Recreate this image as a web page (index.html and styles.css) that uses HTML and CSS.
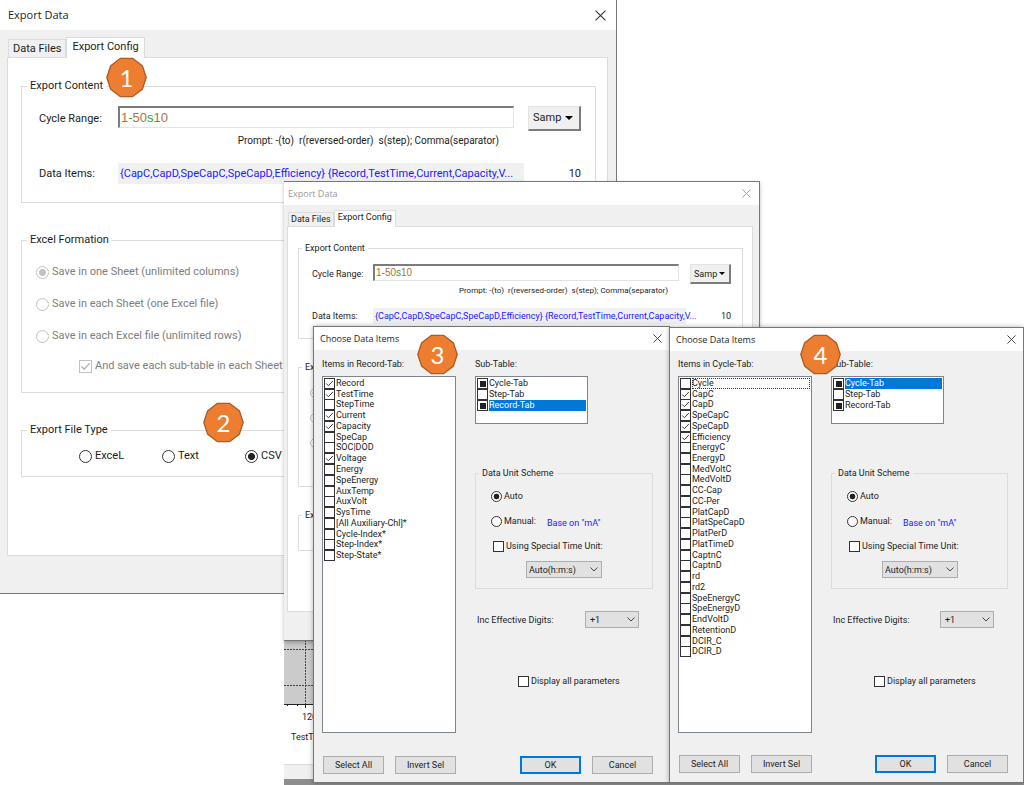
FILE: index.html
```html
<!DOCTYPE html>
<html lang="en">
<head>
<meta charset="utf-8">
<title>Export Data</title>
<link rel="stylesheet" href="styles.css">
</head>
<body>
<main class="desktop">

  <section class="export-window export-window--main" aria-label="Export Data">
    <header class="titlebar">
      <h1 class="titlebar__text">Export Data</h1>
      <button class="close" type="button" aria-label="Close"><svg viewBox="0 0 10 10"><path d="M0.5 0.5 9.5 9.5M9.5 0.5 0.5 9.5"/></svg></button>
    </header>
    <div class="export-body">
      <nav class="tabs">
        <button class="tab" type="button">Data Files</button>
        <button class="tab tab--active" type="button">Export Config</button>
      </nav>
      <div class="panel">
        <fieldset class="group group--content">
          <legend>Export Content</legend>
          <div class="row row--range">
            <label class="row__label" for="range-a">Cycle Range:</label>
            <div class="code">
              <input class="code__input" id="range-a" type="text" value="1-50s10">
              <div class="code__paint" aria-hidden="true">1<b>-</b>50<b>s</b>10</div>
            </div>
            <button class="samp" type="button">Samp <span class="samp__arrow"></span></button>
          </div>
          <p class="prompt">Prompt: -(to)&nbsp; r(reversed-order)&nbsp; s(step); Comma(separator)</p>
          <div class="row row--items">
            <span class="row__label">Data Items:</span>
            <span class="items">{CapC,CapD,SpeCapC,SpeCapD,Efficiency} {Record,TestTime,Current,Capacity,V...</span>
            <span class="count">10</span>
          </div>
        </fieldset>
        <fieldset class="group group--excel" disabled>
          <legend>Excel Formation</legend>
          <label class="option"><input type="radio" name="sheet-a" checked>Save in one Sheet (unlimited columns)</label>
          <label class="option"><input type="radio" name="sheet-a">Save in each Sheet (one Excel file)</label>
          <label class="option"><input type="radio" name="sheet-a">Save in each Excel file (unlimited rows)</label>
          <label class="option option--nested"><input type="checkbox" checked>And save each sub-table in each Sheet</label>
        </fieldset>
        <fieldset class="group group--type">
          <legend>Export File Type</legend>
          <div class="types">
            <label class="option"><input type="radio" name="type-a">ExceL</label>
            <label class="option"><input type="radio" name="type-a">Text</label>
            <label class="option"><input type="radio" name="type-a" checked>CSV</label>
          </div>
        </fieldset>
      </div>
    </div>
  </section>

  <section class="chart" aria-label="Chart">
    <svg class="chart__plot" viewBox="0 0 30 68">
      <rect class="chart__area" width="30" height="64"/>
      <path class="chart__grid" d="M0 9.5H30M0 45.5H30M21.5 0V64"/>
      <path class="chart__axis" d="M0 64.5H30M3.5 64V66M13.5 64V66M21.5 64V68"/>
    </svg>
    <span class="chart__tick">120</span>
    <span class="chart__title">TestTime</span>
    <div class="chart__status"></div>
  </section>

  <section class="export-window export-window--small" aria-label="Export Data">
    <header class="titlebar">
      <h1 class="titlebar__text">Export Data</h1>
      <button class="close" type="button" aria-label="Close"><svg viewBox="0 0 10 10"><path d="M0.5 0.5 9.5 9.5M9.5 0.5 0.5 9.5"/></svg></button>
    </header>
    <div class="export-body">
      <nav class="tabs">
        <button class="tab" type="button">Data Files</button>
        <button class="tab tab--active" type="button">Export Config</button>
      </nav>
      <div class="panel">
        <fieldset class="group group--content">
          <legend>Export Content</legend>
          <div class="row row--range">
            <label class="row__label" for="range-b">Cycle Range:</label>
            <div class="code">
              <input class="code__input" id="range-b" type="text" value="1-50s10">
              <div class="code__paint" aria-hidden="true">1<b>-</b>50<b>s</b>10</div>
            </div>
            <button class="samp" type="button">Samp <span class="samp__arrow"></span></button>
          </div>
          <p class="prompt">Prompt: -(to)&nbsp; r(reversed-order)&nbsp; s(step); Comma(separator)</p>
          <div class="row row--items">
            <span class="row__label">Data Items:</span>
            <span class="items">{CapC,CapD,SpeCapC,SpeCapD,Efficiency} {Record,TestTime,Current,Capacity,V...</span>
            <span class="count">10</span>
          </div>
        </fieldset>
        <fieldset class="group group--excel" disabled>
          <legend>Excel</legend>
          <label class="option"><input type="radio" name="sheet-b" aria-label="One sheet" checked></label>
          <label class="option"><input type="radio" name="sheet-b" aria-label="Each sheet"></label>
          <label class="option"><input type="radio" name="sheet-b" aria-label="Each file"></label>
          <label class="option option--nested"><input type="checkbox" aria-label="Sub-tables" checked></label>
        </fieldset>
        <fieldset class="group group--type">
          <legend>Export</legend>
          <div class="types">
            <label class="option"><input type="radio" name="type-b" aria-label="ExceL"></label>
            <label class="option"><input type="radio" name="type-b" aria-label="Text"></label>
            <label class="option"><input type="radio" name="type-b" aria-label="CSV" checked></label>
          </div>
        </fieldset>
      </div>
    </div>
  </section>

  <section class="dialog dialog--record" aria-label="Choose Data Items">
    <header class="titlebar">
      <h2 class="titlebar__text">Choose Data Items</h2>
      <button class="close" type="button" aria-label="Close"><svg viewBox="0 0 10 10"><path d="M0.5 0.5 9.5 9.5M9.5 0.5 0.5 9.5"/></svg></button>
    </header>
    <div class="dialog__body">
      <div class="column">
        <h3 class="caption">Items in Record-Tab:</h3>
        <div class="listbox listbox--items">
          <ul class="checks checks--record">
            <li><label><input type="checkbox" checked>Record</label></li>
            <li><label><input type="checkbox" checked>TestTime</label></li>
            <li><label><input type="checkbox">StepTime</label></li>
            <li><label><input type="checkbox" checked>Current</label></li>
            <li><label><input type="checkbox" checked>Capacity</label></li>
            <li><label><input type="checkbox">SpeCap</label></li>
            <li><label><input type="checkbox">SOC|DOD</label></li>
            <li><label><input type="checkbox" checked>Voltage</label></li>
            <li><label><input type="checkbox">Energy</label></li>
            <li><label><input type="checkbox">SpeEnergy</label></li>
            <li><label><input type="checkbox">AuxTemp</label></li>
            <li><label><input type="checkbox">AuxVolt</label></li>
            <li><label><input type="checkbox">SysTime</label></li>
            <li><label><input type="checkbox">[All Auxiliary-Chl]*</label></li>
            <li><label><input type="checkbox">Cycle-Index*</label></li>
            <li><label><input type="checkbox">Step-Index*</label></li>
            <li><label><input type="checkbox">Step-State*</label></li>
          </ul>
        </div>
      </div>
      <div class="column">
        <h3 class="caption">Sub-Table:</h3>
        <div class="listbox listbox--sub">
          <ul class="checks checks--sub">
            <li><label><input type="checkbox" class="partial">Cycle-Tab</label></li>
            <li><label><input type="checkbox">Step-Tab</label></li>
            <li class="selected"><label><input type="checkbox" class="partial"><span>Record-Tab</span></label></li>
          </ul>
        </div>
        <fieldset class="group unit">
          <legend>Data Unit Scheme</legend>
          <label class="option"><input type="radio" name="unit-c" checked>Auto</label>
          <div class="unit__manual">
            <label class="option"><input type="radio" name="unit-c">Manual:</label>
            <span class="unit__base">Base on "mA"</span>
          </div>
          <label class="option unit__time"><input type="checkbox">Using Special Time Unit:</label>
          <select class="select select--time" aria-label="Time unit"><option>Auto(h:m:s)</option></select>
        </fieldset>
        <div class="digits">
          <label for="digits-c">Inc Effective Digits:</label>
          <select class="select select--digits" id="digits-c"><option>+1</option></select>
        </div>
        <label class="option display-all"><input type="checkbox">Display all parameters</label>
      </div>
    </div>
    <footer class="dialog__footer">
      <div class="buttons"><button class="button" type="button">Select All</button><button class="button" type="button">Invert Sel</button></div>
      <div class="buttons"><button class="button button--default" type="button">OK</button><button class="button" type="button">Cancel</button></div>
    </footer>
  </section>

  <section class="dialog dialog--cycle" aria-label="Choose Data Items">
    <header class="titlebar">
      <h2 class="titlebar__text">Choose Data Items</h2>
      <button class="close" type="button" aria-label="Close"><svg viewBox="0 0 10 10"><path d="M0.5 0.5 9.5 9.5M9.5 0.5 0.5 9.5"/></svg></button>
    </header>
    <div class="dialog__body">
      <div class="column">
        <h3 class="caption">Items in Cycle-Tab:</h3>
        <div class="listbox listbox--items">
          <ul class="checks checks--cycle">
            <li class="focused"><label><input type="checkbox"><span>Cycle</span></label></li>
            <li><label><input type="checkbox" checked>CapC</label></li>
            <li><label><input type="checkbox" checked>CapD</label></li>
            <li><label><input type="checkbox" checked>SpeCapC</label></li>
            <li><label><input type="checkbox" checked>SpeCapD</label></li>
            <li><label><input type="checkbox" checked>Efficiency</label></li>
            <li><label><input type="checkbox">EnergyC</label></li>
            <li><label><input type="checkbox">EnergyD</label></li>
            <li><label><input type="checkbox">MedVoltC</label></li>
            <li><label><input type="checkbox">MedVoltD</label></li>
            <li><label><input type="checkbox">CC-Cap</label></li>
            <li><label><input type="checkbox">CC-Per</label></li>
            <li><label><input type="checkbox">PlatCapD</label></li>
            <li><label><input type="checkbox">PlatSpeCapD</label></li>
            <li><label><input type="checkbox">PlatPerD</label></li>
            <li><label><input type="checkbox">PlatTimeD</label></li>
            <li><label><input type="checkbox">CaptnC</label></li>
            <li><label><input type="checkbox">CaptnD</label></li>
            <li><label><input type="checkbox">rd</label></li>
            <li><label><input type="checkbox">rd2</label></li>
            <li><label><input type="checkbox">SpeEnergyC</label></li>
            <li><label><input type="checkbox">SpeEnergyD</label></li>
            <li><label><input type="checkbox">EndVoltD</label></li>
            <li><label><input type="checkbox">RetentionD</label></li>
            <li><label><input type="checkbox">DCIR_C</label></li>
            <li><label><input type="checkbox">DCIR_D</label></li>
          </ul>
        </div>
      </div>
      <div class="column">
        <h3 class="caption">Sub-Table:</h3>
        <div class="listbox listbox--sub">
          <ul class="checks checks--sub">
            <li class="selected"><label><input type="checkbox" class="partial"><span>Cycle-Tab</span></label></li>
            <li><label><input type="checkbox">Step-Tab</label></li>
            <li><label><input type="checkbox" class="partial">Record-Tab</label></li>
          </ul>
        </div>
        <fieldset class="group unit">
          <legend>Data Unit Scheme</legend>
          <label class="option"><input type="radio" name="unit-d" checked>Auto</label>
          <div class="unit__manual">
            <label class="option"><input type="radio" name="unit-d">Manual:</label>
            <span class="unit__base">Base on "mA"</span>
          </div>
          <label class="option unit__time"><input type="checkbox">Using Special Time Unit:</label>
          <select class="select select--time" aria-label="Time unit"><option>Auto(h:m:s)</option></select>
        </fieldset>
        <div class="digits">
          <label for="digits-d">Inc Effective Digits:</label>
          <select class="select select--digits" id="digits-d"><option>+1</option></select>
        </div>
        <label class="option display-all"><input type="checkbox">Display all parameters</label>
      </div>
    </div>
    <footer class="dialog__footer">
      <div class="buttons"><button class="button" type="button">Select All</button><button class="button" type="button">Invert Sel</button></div>
      <div class="buttons"><button class="button button--default" type="button">OK</button><button class="button" type="button">Cancel</button></div>
    </footer>
  </section>

  <div class="badge badge--1"><svg viewBox="0 0 40 40"><path d="M39.2 20 35.5 31.3 26 38.7H14L4.5 31.3.8 20 4.5 8.7 14 1.3H26L35.5 8.7Z"/></svg><span>1</span></div>
  <div class="badge badge--2"><svg viewBox="0 0 40 40"><path d="M39.2 20 35.5 31.3 26 38.7H14L4.5 31.3.8 20 4.5 8.7 14 1.3H26L35.5 8.7Z"/></svg><span>2</span></div>
  <div class="badge badge--3"><svg viewBox="0 0 40 40"><path d="M39.2 20 35.5 31.3 26 38.7H14L4.5 31.3.8 20 4.5 8.7 14 1.3H26L35.5 8.7Z"/></svg><span>3</span></div>
  <div class="badge badge--4"><svg viewBox="0 0 40 40"><path d="M39.2 20 35.5 31.3 26 38.7H14L4.5 31.3.8 20 4.5 8.7 14 1.3H26L35.5 8.7Z"/></svg><span>4</span></div>
</main>
</body>
</html>
```

FILE: styles.css
```css
* { box-sizing: border-box; }

body {
  margin: 0;
  background: #fff;
  color: #1c1c1c;
  font-family: Roboto, "Liberation Sans", Arial, sans-serif;
}

h1, h2, h3, p, ul { margin: 0; padding: 0; font-weight: normal; }
ul { list-style: none; }
button, input, select { font: inherit; color: inherit; margin: 0; }

.desktop {
  position: relative;
  min-height: 100vh;
  overflow: hidden;
}

/* Title bars */
.titlebar {
  display: flex;
  align-items: center;
  justify-content: space-between;
  height: var(--title-height);
  padding: 0 var(--title-right) 0 var(--title-left);
  background: #fff;
}
.titlebar__text {
  font-family: "Open Sans", "Noto Sans", sans-serif;
  font-size: var(--title-font);
  line-height: var(--title-height);
}
.close {
  width: var(--close);
  height: var(--close);
  padding: 0;
  border: 0;
  background: none;
}
.close svg { display: block; width: 100%; height: 100%; }
.close path { fill: none; stroke: #333; stroke-width: 1; }

/* Export windows */
.export-window {
  position: absolute;
  background: #f0f0f0;
  border-right: 1px solid #777;
  border-bottom: 1px solid #777;
  font-size: var(--font);
  line-height: var(--line);
}
.export-window--main {
  left: 0;
  top: 0;
  width: 617px;
  --font: 11px; --prompt-font: 10px; --line: 16px;
  --title-height: 30px; --title-left: 8px; --title-right: 10px; --title-font: 11px; --close: 11px;
  --body-pad: 7px 8px 37px 7px; --tab-height: 18px; --tab-pad: 4px;
  --panel-pad: 20px 11px 78px 13px; --panel-gap: 29px;
  --legend-left: 5px; --row-left: 17px; --row-right: 14px; --label: 79px;
  --content-top: 12px; --range: 25px; --field: 22px; --samp: 53px; --samp-gap: 14px;
  --prompt-top: 2px; --prompt-right: 82px; --items-top: 14px; --items: 21px; --count: 57px; --content-bottom: 18px;
  --code-font: 13px; --box: 13px; --box-gap: 3px;
  --excel-top: 16px; --excel-gap: 16px; --nest: 43px; --option-left: 14px;
  --type-top: 10px; --type-bottom: 12px; --type-left: 57px; --type-width: 83px;
}
.export-window--small {
  left: 284px;
  top: 181px;
  width: 476px;
  border-top: 1px solid #777;
  box-shadow: 0 2px 4px rgba(0, 0, 0, .25);
  --font: 9px; --prompt-font: 8px; --line: 12px;
  --title-height: 23px; --title-left: 4px; --title-right: 8px; --title-font: 9px; --close: 9px;
  --body-pad: 5px 6px 28px 3px; --tab-height: 14px; --tab-pad: 2px;
  --panel-pad: 15px 9px 60px 10px; --panel-gap: 22px;
  --legend-left: 3px; --row-left: 13px; --row-right: 11px; --label: 61px;
  --content-top: 10px; --range: 20px; --field: 17px; --samp: 41px; --samp-gap: 11px;
  --prompt-top: 1px; --prompt-right: 63px; --items-top: 11px; --items: 16px; --count: 45px; --content-bottom: 14px;
  --code-font: 10px; --box: 10px; --box-gap: 2px;
  --excel-top: 14px; --excel-gap: 13px; --nest: 33px; --option-left: 11px;
  --type-top: 8px; --type-bottom: 9px; --type-left: 44px; --type-width: 65px;
}
.export-window--small .titlebar__text { color: #999; }
.export-window--small .close path { stroke: #999; }

.export-body { padding: var(--body-pad); }
.tabs { display: flex; align-items: flex-end; padding-left: 1px; }
.tab {
  height: var(--tab-height);
  padding: 0 var(--tab-pad);
  border: 1px solid #dcdcdc;
  border-bottom: 0;
  background: #f0f0f0;
  line-height: 1;
  white-space: nowrap;
}
.tab--active {
  height: calc(var(--tab-height) + 3px);
  padding: 0 calc(var(--tab-pad) + 1px) 3px;
  margin-bottom: -1px;
  background: #fff;
}
.panel {
  display: flex;
  flex-direction: column;
  gap: var(--panel-gap);
  padding: var(--panel-pad);
  background: #fff;
  border: 1px solid #dcdcdc;
}

.group {
  margin: 0;
  padding: 0;
  min-width: 0;
  border: 1px solid #dcdcdc;
}
.group legend { margin-left: var(--legend-left); padding: 0 3px; }

.group--content { padding: var(--content-top) var(--row-right) var(--content-bottom) var(--row-left); }
.row { display: flex; }
.row--range { height: var(--range); }
.row--items { height: var(--items); margin-top: var(--items-top); align-items: center; }
.row__label { flex: none; width: var(--label); }
.row--range .row__label { line-height: var(--range); }

.code {
  position: relative;
  flex: 1;
  height: var(--field);
  border: 1px solid #e3e3e3;
  border-top: 2px solid #7c7c7c;
  border-left: 2px solid #7c7c7c;
  font-family: "Liberation Sans", Arial, sans-serif;
  font-size: var(--code-font);
}
.code__input {
  display: block;
  width: 100%;
  height: 100%;
  padding: 0 1px;
  border: 0;
  background: none;
  color: transparent;
  caret-color: #000;
}
.code__paint {
  position: absolute;
  inset: 0;
  display: flex;
  align-items: center;
  padding: 0 1px;
  color: #b0713a;
  pointer-events: none;
}
.code__paint b { font-weight: normal; color: #2c9c3c; }

.samp {
  display: flex;
  align-items: center;
  justify-content: space-between;
  width: var(--samp);
  margin-left: var(--samp-gap);
  padding: 0 6px 0 4px;
  border: 1px solid #e3e3e3;
  border-right: 2px solid #7c7c7c;
  border-bottom: 2px solid #7c7c7c;
  background: #f0f0f0;
}
.samp__arrow {
  border: 4px solid transparent;
  border-top-color: #000;
  border-bottom: 0;
}
.export-window--small .samp { padding: 0 4px 0 3px; }
.export-window--small .samp__arrow { border-width: 3px 3px 0; }

.prompt { margin-top: var(--prompt-top); padding-right: var(--prompt-right); font-size: var(--prompt-font); text-align: right; white-space: nowrap; }
.items {
  flex: 1;
  min-width: 0;
  height: 100%;
  padding-left: 2px;
  background: #f0f0f0;
  color: #1a1aff;
  line-height: var(--items);
  white-space: nowrap;
}
.count { width: var(--count); text-align: right; }

.option { display: flex; align-items: center; gap: var(--box-gap); height: var(--line); white-space: nowrap; }
.group--excel { padding: var(--excel-top) 0 var(--content-bottom) var(--option-left); color: #7d7d7d; }
.group--excel legend { margin-left: calc(var(--legend-left) - var(--option-left)); color: #1c1c1c; }
.group--content legend { margin-left: calc(var(--legend-left) - var(--row-left)); }
.group--excel .option + .option { margin-top: var(--excel-gap); }
.group--excel .option--nested { padding-left: var(--nest); }
.group--excel .option + .option--nested { margin-top: calc(var(--excel-gap) - 2px); }
.types { display: flex; padding: var(--type-top) 0 var(--type-bottom) var(--type-left); }
.types .option { width: var(--type-width); }

/* Radio buttons and tick boxes */
input[type="radio"], input[type="checkbox"] {
  appearance: none;
  flex: none;
  width: var(--box);
  height: var(--box);
  border: 1px solid #333;
  background: #fff center / 100% 100% no-repeat;
}
input[type="radio"] { border-radius: 50%; }
input[type="radio"]:checked { background-image: radial-gradient(circle, #222 0 40%, transparent 50%); }
input[type="checkbox"]:checked { background-image: url("data:image/svg+xml,%3Csvg xmlns='http://www.w3.org/2000/svg' viewBox='0 0 11 11'%3E%3Cpath d='M1.5 5.5 4.2 8.2 9.6 2.4' fill='none' stroke='%23333' stroke-width='1.2'/%3E%3C/svg%3E"); }
input[type="checkbox"].partial { background-image: linear-gradient(#222, #222); background-size: 6px 6px; }
input:disabled { border-color: #c2c2c2; }
input[type="radio"]:disabled:checked { background-image: radial-gradient(circle, #c2c2c2 0 40%, transparent 50%); }
input[type="checkbox"]:disabled:checked { background-image: url("data:image/svg+xml,%3Csvg xmlns='http://www.w3.org/2000/svg' viewBox='0 0 11 11'%3E%3Cpath d='M1.5 5.5 4.2 8.2 9.6 2.4' fill='none' stroke='%23aaa' stroke-width='1.2'/%3E%3C/svg%3E"); }

/* Chart window behind the dialogs */
.chart {
  position: absolute;
  left: 284px;
  right: 0;
  top: 640px;
  display: flex;
  flex-direction: column;
  background: #fff;
  border-bottom: 8px solid #8e8e8e;
  font-size: 9px;
  line-height: 12px;
}
.chart__plot { display: block; width: 30px; height: 68px; }
.chart__area { fill: #cbcbcb; }
.chart__grid { fill: none; stroke: #444; stroke-dasharray: 2 1; }
.chart__axis { fill: none; stroke: #222; }
.chart__tick { margin-top: 3px; padding-left: 18px; }
.chart__title { margin-top: 8px; padding-left: 7px; }
.chart__status { height: 15px; margin-top: 21px; background: #f0f0f0; border-top: 1px solid #dcdcdc; }

/* Choose Data Items dialogs */
.dialog {
  position: absolute;
  background: #f0f0f0;
  border: 1px solid #777;
  box-shadow: 0 0 5px rgba(0, 0, 0, .3);
  font-size: 9px;
  line-height: 12px;
  --line: 12px; --box: 11px; --box-gap: 2px; --legend-left: 3px;
  --title-height: 23px; --title-left: 6px; --title-right: 7px; --title-font: 9px; --close: 9px;
}
.dialog--record { left: 313px; top: 326px; width: 357px; }
.dialog--cycle { left: 669px; top: 327px; width: 355px; }
.dialog__body {
  display: grid;
  grid-template-columns: 134px 1fr;
  gap: 19px;
  padding: 8px 16px 0 8px;
}
.dialog--cycle .dialog__body { padding: 7px 15px 0 8px; }
.column { display: flex; flex-direction: column; min-width: 0; }
.caption { font-size: 9px; margin-bottom: 6px; }
.listbox { background: #fff; border: 1px solid #7f858c; padding: 1px; }
.listbox--items { height: 357px; }
.listbox--sub { width: 113px; height: 48px; }

.checks { display: flex; flex-direction: column; }
.checks--record { height: 183px; }
.checks--cycle { height: 279px; }
.checks--sub { height: 33px; }
.checks li { flex: 1; min-height: 0; }
.checks label { display: flex; align-items: center; gap: 1px; height: 100%; line-height: 11px; }
.checks span { flex: 1; height: 100%; }
.selected span { background: #0078d7; color: #fff; }
.focused span { outline: 1px dotted #333; outline-offset: -1px; }

.unit { margin-top: 43px; padding: 11px 0 10px 15px; }
.unit legend { margin-left: -12px; }
.unit__manual { display: flex; gap: 11px; margin-top: 13px; }
.unit__base { color: #1a1aff; padding-top: 2px; }
.unit__time { margin-top: 11px; padding-left: 2px; }
.select {
  appearance: none;
  height: 17px;
  padding: 0 14px 0 2px;
  border: 1px solid #adadad;
  border-radius: 0;
  background: #e1e1e1 url("data:image/svg+xml,%3Csvg xmlns='http://www.w3.org/2000/svg' viewBox='0 0 8 5'%3E%3Cpath d='M.5.5 4 4 7.5.5' fill='none' stroke='%23444'/%3E%3C/svg%3E") right 3px center / 8px 5px no-repeat;
}
.select--time { display: block; width: 76px; margin: 9px 0 0 35px; }
.select--digits { width: 54px; padding-left: 4px; }
.digits { display: flex; justify-content: space-between; align-items: center; margin-top: 22px; padding: 0 14px 0 2px; }
.display-all { margin-top: 47px; padding-left: 43px; }

.dialog__footer {
  display: flex;
  justify-content: space-between;
  padding: 23px 16px 8px 9px;
}
.dialog--cycle .dialog__footer { padding: 22px 15px 9px 9px; }
.buttons { display: flex; gap: 11px; }
.button {
  width: 61px;
  height: 18px;
  padding: 0;
  border: 1px solid #adadad;
  background: #e1e1e1;
}
.button--default { border: 2px solid #0078d7; }

/* Numbered callouts */
.badge {
  position: absolute;
  display: grid;
  place-items: center;
  width: 41px;
  height: 41px;
  color: #fff;
  font: 24px/41px Lato, sans-serif;
}
.badge svg, .badge span { grid-area: 1 / 1; }
.badge svg { width: 41px; height: 41px; }
.badge path { fill: #ed7d31; stroke: #ae5a21; stroke-width: 1.3; }
.badge--1 { left: 106px; top: 57px; }
.badge--2 { left: 203px; top: 402px; }
.badge--3 { left: 417px; top: 334px; }
.badge--4 { left: 800px; top: 334px; }
```
